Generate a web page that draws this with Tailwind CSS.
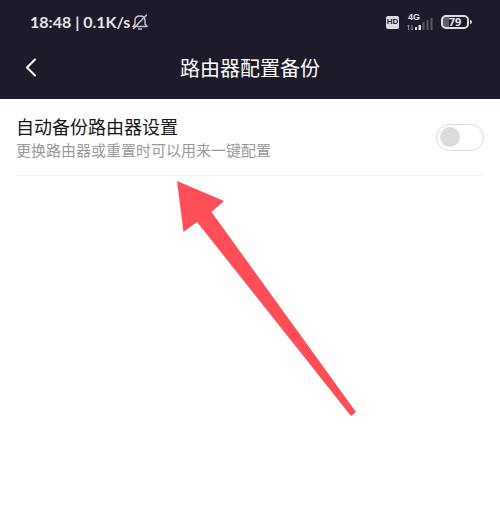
<!DOCTYPE html>
<html lang="zh-CN">

<head>
    <meta charset="UTF-8">
    <meta name="viewport" content="width=device-width, initial-scale=1.0">
    <title>路由器配置备份</title>
    <script src="https://cdn.jsdelivr.net/npm/@tailwindcss/browser@4"></script>
</head>

<body class="bg-white min-h-screen font-['Noto_Sans','Noto_Sans_CJK_SC',sans-serif]">
    <header class="bg-[#1c1a2b] text-white">
        <!-- status bar -->
        <div class="flex items-center justify-between h-11 pl-[30px] pr-7 text-[#e4e4ea]">
            <div class="flex items-center gap-px">
                <span class="font-['Lato','Noto_Sans_CJK_SC',sans-serif] font-bold text-[16px] leading-6 whitespace-pre">18:48 | 0.1K/s</span>
                <svg class="w-[18px] h-[18px]" viewBox="0 0 18 18" fill="none" stroke="#c4c4cc" stroke-width="1.5" stroke-linecap="round" stroke-linejoin="round">
                    <path d="M2 13.5H16L14 11V7.500C14 4.500 12 3 9 3S4 4.500 4 7.500V11L2 13.5M7.500 16H10.500" />
                    <path d="M15.500 2L2.500 15.500" />
                </svg>
            </div>
            <div class="flex items-center gap-2">
                <span class="flex items-center justify-center w-[13px] h-[13px] rounded-xs bg-[#dcdce2] text-[#1c1a2b] font-['Liberation_Sans',sans-serif] font-bold text-[8px] leading-none">HD</span>
                <div class="flex flex-col w-[26px] h-[18px]">
                    <span class="font-['Liberation_Sans',sans-serif] font-bold text-[9px] leading-2 pl-px">4G</span>
                    <svg class="w-[26px] h-[16px] -mt-[6px]" viewBox="0 0 26 16">
                        <path d="M1.500 10V15M.500 11.200L1.500 10L2.500 11.200M5 10V15M4 13.800L5 15L6 13.800" fill="none" stroke="#8e8d98" />
                        <path d="M8 12h2v3h-2zM11.500 10h2.500v5h-2.500z" fill="#e4e4ea" />
                        <path d="M15.500 7h2v8h-2zM19.500 5h2v10h-2zM23.500 3h2v12h-2z" fill="#5a5966" />
                    </svg>
                </div>
                <div class="flex items-center gap-px">
                    <div class="flex items-center justify-center w-7 h-[14px] rounded-[5px] border-2 border-[#dcdce2] bg-linear-to-r from-[#5d5c68] from-25% to-[#1c1a2b] to-25% font-['Open_Sans',sans-serif] font-bold text-[11px] leading-3">79</div>
                    <span class="w-[2px] h-1 rounded-r-xs bg-[#dcdce2]"></span>
                </div>
            </div>
        </div>
        <!-- title bar -->
        <div class="grid grid-cols-[1fr_auto_1fr] items-start h-[55px] pt-2 px-6">
            <button type="button" aria-label="返回" class="w-8 h-8 flex items-center">
                <svg class="w-4 h-5" viewBox="0 0 16 20" fill="none" stroke="currentColor" stroke-width="2" stroke-linecap="round" stroke-linejoin="round">
                    <path d="M11 1.500L3 9.500L11 17.500" />
                </svg>
            </button>
            <h1 class="text-[20px] leading-8 font-['Noto_Sans_CJK_SC',sans-serif]">路由器配置备份</h1>
        </div>
    </header>

    <main class="relative px-4">
        <label for="auto-backup" class="flex items-center justify-between h-[77px] border-b border-[#f4f4f4] font-['Noto_Sans_CJK_SC',sans-serif]">
            <span class="block pt-px">
                <span class="block text-[18px] leading-6 text-[#151515]">自动备份路由器设置</span>
                <span class="block text-[15px] leading-6 text-[#999999]">更换路由器或重置时可以用来一键配置</span>
            </span>
            <input type="checkbox" role="switch" id="auto-backup"
                class="appearance-none flex items-center w-12 h-[27px] px-[3px] shrink-0 rounded-full border border-[#dddddd] bg-white before:content-[''] before:block before:w-5 before:h-5 before:rounded-full before:bg-[#dcdcdc] checked:justify-end">
        </label>

        <!-- arrow pointing at the setting -->
        <svg class="absolute left-[177px] top-[82px] w-[180px] h-[236px] pointer-events-none" viewBox="0 0 180 236" fill="#ff4e57">
            <path d="M0 0L47 20L34.500 31L179 231L174 235L20 41L6.500 51Z" />
        </svg>
    </main>
</body>

</html>
